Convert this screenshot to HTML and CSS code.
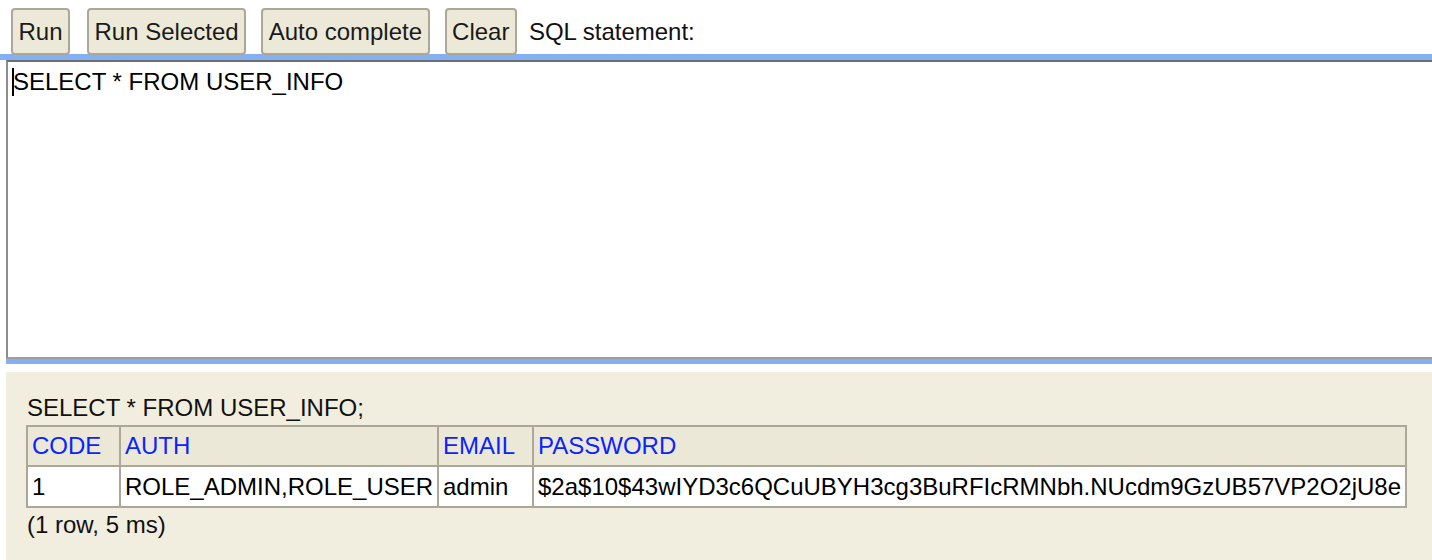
FILE: index.html
```html
<!DOCTYPE html>
<html>
<head>
<meta charset="utf-8">
<title>H2 Console</title>
<link rel="stylesheet" href="styles.css">
</head>
<body>
<div class="toolbar">
  <button class="btn">Run</button>
  <button class="btn">Run Selected</button>
  <button class="btn">Auto complete</button>
  <button class="btn">Clear</button>
  <span class="label">SQL statement:</span>
</div>
<div class="bar-top"></div>
<div class="editor">
  <textarea class="sql" spellcheck="false">SELECT * FROM USER_INFO</textarea>
</div>
<div class="bar-bottom"></div>
<div class="result">
  <div class="stmt">SELECT * FROM USER_INFO;</div>
  <table class="grid">
    <thead>
      <tr>
        <th class="c1">CODE</th>
        <th class="c2">AUTH</th>
        <th class="c3">EMAIL</th>
        <th class="c4">PASSWORD</th>
      </tr>
    </thead>
    <tbody>
      <tr>
        <td>1</td>
        <td>ROLE_ADMIN,ROLE_USER</td>
        <td>admin</td>
        <td>$2a$10$43wIYD3c6QCuUBYH3cg3BuRFIcRMNbh.NUcdm9GzUB57VP2O2jU8e</td>
      </tr>
    </tbody>
  </table>
  <div class="meta">(1 row, 5 ms)</div>
</div>
</body>
</html>
```

FILE: styles.css
```css
html, body {
  margin: 0;
  padding: 0;
  background: #ffffff;
  overflow: hidden;
  font-family: "Liberation Sans", Arial, sans-serif;
  font-size: 24px;
  color: #111;
}

.toolbar {
  height: 54px;
  box-sizing: border-box;
  padding: 8px 0 0 11px;
  display: flex;
  align-items: flex-start;
  gap: 15px;
}

.btn {
  font-family: "Liberation Sans", Arial, sans-serif;
  font-size: 24px;
  line-height: 28px;
  height: 47px;
  padding: 0 5.5px;
  margin: 0;
  background: #ece9d8;
  border: 2px solid #aca899;
  border-radius: 4px;
  color: #1a1a1a;
}

.btn:first-child {
  margin-right: 2px;
}

.label {
  margin-left: -3px;
  line-height: 47px;
  color: #111;
}

.bar-top {
  height: 6px;
  background: #82b0f2;
}

.editor {
  position: relative;
  margin-left: 6px;
}

.editor::after {
  content: "";
  position: absolute;
  left: 6px;
  top: 8px;
  width: 2px;
  height: 28px;
  background: #000;
}

.sql {
  display: block;
  box-sizing: border-box;
  width: 100%;
  height: 299px;
  margin: 0;
  padding: 6px 4px 0 5px;
  border: none;
  border-top: 2px solid #6f6f6f;
  border-left: 2px solid #8e8e8e;
  border-bottom: 2px solid #a09c98;
  font-family: "Liberation Sans", Arial, sans-serif;
  font-size: 24px;
  line-height: 28px;
  color: #000;
  resize: none;
  outline: none;
  background: #fff;
}

.bar-bottom {
  margin-left: 6px;
  height: 5px;
  background: #82b0f2;
}

.result {
  box-sizing: border-box;
  margin: 8px 0 0 6px;
  background: #f1eee0;
  padding: 22px 0 0 20px;
  height: 188px;
}

.stmt {
  line-height: 28px;
  margin-left: 1px;
  margin-bottom: 3px;
}

.grid {
  border-collapse: separate;
  border-spacing: 0;
  table-layout: fixed;
  width: 1381px;
  border-left: 2px solid #aca899;
  border-top: 2px solid #aca899;
}

.grid th,
.grid td {
  box-sizing: border-box;
  border-right: 2px solid #aca899;
  border-bottom: 2px solid #aca899;
  line-height: 28px;
  padding: 5px 4px;
  text-align: left;
  white-space: nowrap;
  font-weight: normal;
}

.grid th {
  background: #ebe8d8;
  color: #0a24ff;
}

.grid td {
  background: #ffffff;
  color: #000;
  padding-top: 6px;
}

.c1 { width: 93px; }
.c2 { width: 318px; }
.c3 { width: 95px; }
.c4 { width: 873px; }

.meta {
  line-height: 28px;
  margin-top: 3px;
  margin-left: 1px;
}
```
